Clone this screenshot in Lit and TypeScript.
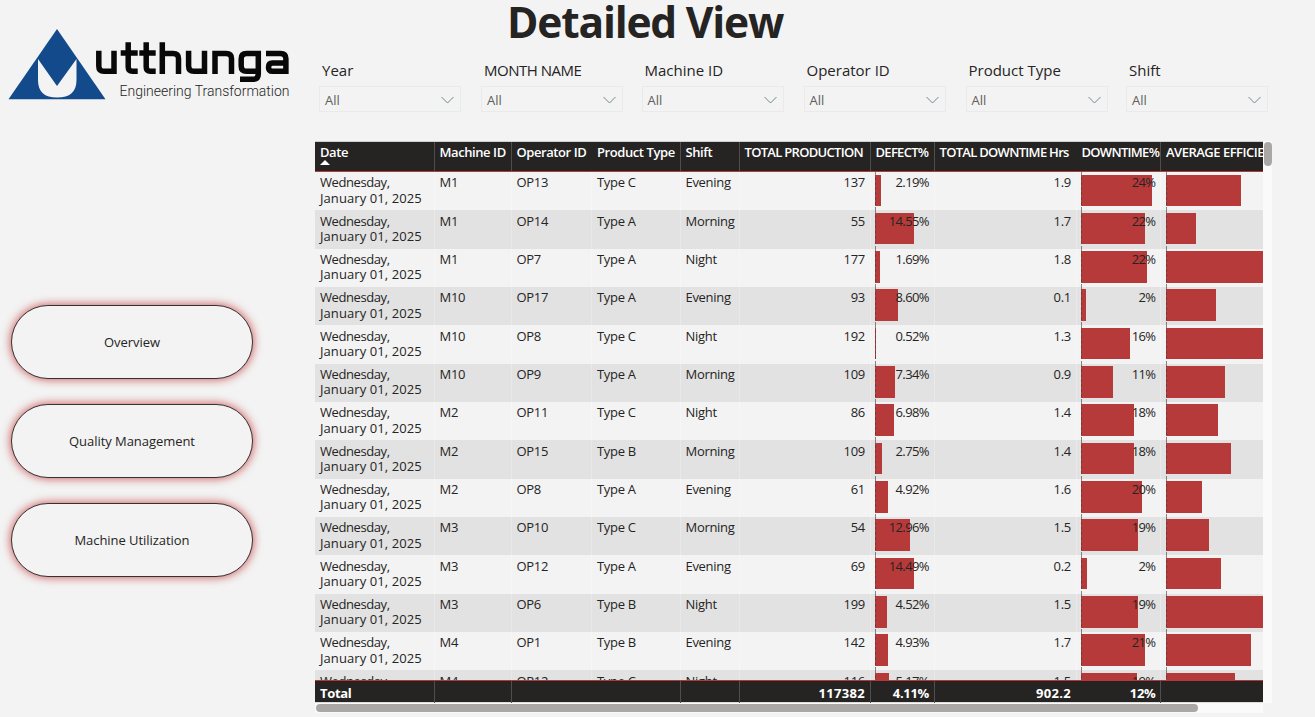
import { LitElement, html, css, svg } from "lit";
import { customElement } from "lit/decorators.js";

interface Row {
  m: string; op: string; type: string; shift: string; prod: string;
  defect: string; hrs: string; down: string; dw: number; aw: number;
}
const r = (m: string, op: string, type: string, shift: string, prod: string, defect: string, hrs: string, down: string, dw: number, aw: number): Row =>
  ({ m, op, type, shift, prod, defect, hrs, down, dw, aw });

const ROWS: Row[] = [
  r("M1", "OP13", "Type C", "Evening", "137", "2.19", "1.9", "24", 70.5, 75),
  r("M1", "OP14", "Type A", "Morning", "55", "14.55", "1.7", "22", 63.5, 30),
  r("M1", "OP7", "Type A", "Night", "177", "1.69", "1.8", "22", 65.5, 110),
  r("M10", "OP17", "Type A", "Evening", "93", "8.60", "0.1", "2", 4.5, 50.7),
  r("M10", "OP8", "Type C", "Night", "192", "0.52", "1.3", "16", 48.5, 110),
  r("M10", "OP9", "Type A", "Morning", "109", "7.34", "0.9", "11", 32.3, 59.3),
  r("M2", "OP11", "Type C", "Night", "86", "6.98", "1.4", "18", 53, 52),
  r("M2", "OP15", "Type B", "Morning", "109", "2.75", "1.4", "18", 53, 65.3),
  r("M2", "OP8", "Type A", "Evening", "61", "4.92", "1.6", "20", 60.5, 36.3),
  r("M3", "OP10", "Type C", "Morning", "54", "12.96", "1.5", "19", 56.5, 43),
  r("M3", "OP12", "Type A", "Evening", "69", "14.49", "0.2", "2", 5.7, 55.3),
  r("M3", "OP6", "Type B", "Night", "199", "4.52", "1.5", "19", 57, 110),
  r("M4", "OP1", "Type B", "Evening", "142", "4.93", "1.7", "21", 63.7, 85.5),
  r("M4", "OP12", "Type C", "Night", "116", "5.17", "1.5", "19", 55.5, 69.5),
];

@customElement("app-root")
export class AppRoot extends LitElement {
  static styles = css`
    :host { display: block; width: 1315px; height: 717px; overflow: hidden; background: #f3f3f3; color: #252423;
      font-family: "Trebuchet MS", "Open Sans", "Noto Sans", sans-serif; font-size: 13px; letter-spacing: -0.3px; }
    * { box-sizing: border-box; }
    .page { display: grid; grid-template-columns: 315px 1fr; height: 717px; }
    .side { display: flex; flex-direction: column; padding: 0 0 0 11px; }
    .logo { width: 300px; height: 120px; margin-left: -11px; flex: none; display: block; letter-spacing: 0; }
    .nav { display: flex; flex-direction: column; gap: 24.5px; margin-top: 184.6px; }
    .pill { width: 242px; height: 74.5px; border: 1px solid #333; border-radius: 37.5px; background: #f3f3f3; padding-bottom: .5px;
      box-shadow: 0 0 8px 1px rgba(192, 40, 40, .7); display: flex; align-items: center; justify-content: center; font-size: 13px; letter-spacing: -.05px; }
    .main { display: flex; flex-direction: column; }
    h1 { margin: 0 0 0 192px; height: 53px; line-height: 43px; font-size: 42.5px; font-weight: 700; letter-spacing: -1.2px; white-space: nowrap; }
    .slicers { display: grid; grid-template-columns: 162px 160.5px 162px 162px 160.5px 161px; height: 88px; padding: 7px 0 0 4px; letter-spacing: 0; }
    .slicer label { display: block; height: 26px; line-height: 20px; padding-left: 3px; font-size: 15px; }
    .slicer label.tight { letter-spacing: -.5px; }
    .select { width: 142px; height: 26px; border: 1px solid #eaeaea; display: flex; align-items: center; justify-content: space-between;
      padding: 2px 6px 0 5px; color: #605e5c; font-size: 13px; }
    .select svg { width: 13px; height: 8px; }
    .visual { display: grid; grid-template-columns: 948px 9px; grid-template-rows: 562px 10px; }
    .table { display: flex; flex-direction: column; overflow: hidden; width: 948px; }
    .line { display: grid; grid-template-columns: 119.5px 77px 80.5px 88.5px 59px 131px 64px 142px 84.5px 180px; flex: none; }
    .head { height: 31px; background: #252423; color: #fff; border-top: 1px solid #cfcfcf; border-bottom: 1px solid #b33a3a; font-weight: 600; letter-spacing: -.42px; }
    .head .caps { letter-spacing: -.7px; }
    .head .last { letter-spacing: -.5px; }
    .head .cell { padding-top: 0; line-height: 20px; border-right: 1px solid #4f4e4d; overflow: visible; }
    .head .plain, .foot .plain { border-right-color: transparent; }
    .cell { padding: 3.4px 4.5px 0 5px; line-height: 15.4px; white-space: nowrap; border-right: 1px solid rgba(255,255,255,.25); min-width: 0; }
    .date { letter-spacing: .08px; }
    .day { letter-spacing: -.42px; }
    .num { text-align: right; }
    .sort { display: block; width: 10px; height: 5px; margin-top: -2px; }
    .body { flex: 1; overflow: hidden; min-height: 0; }
    .body .line { height: 38.34px; }
    .body .line:nth-child(even) { background: #e2e2e2; }
    .line .bar { display: grid; padding: 0; overflow: hidden; }
    .bar > * { grid-area: 1 / 1; }
    .fill { margin: 2.5px 0 4px 4.5px; background: #b63a3a; height: 31.5px; }
    .axis { margin-left: 4.5px; width: 0; border-left: 1px dashed rgba(60,60,60,.6); }
    .val { padding: 3.4px 4.5px 0 0; text-align: right; letter-spacing: -.6px; }
    .foot { height: 23px; background: #252423; color: #fff; border-top: 1px solid #b33a3a; font-weight: 700; border-bottom: 1px solid #ddd; }
    .foot .cell { padding-top: 1px; line-height: 22px; border-right: 1px solid #4f4e4d; }
    .foot .plain { border-right-color: transparent; }
    .foot .wide { letter-spacing: .3px; }
    .vs { background: #fafafa; }
    .vthumb { width: 8px; height: 24px; margin: 1px 0 0 1px; border-radius: 4px; background: #a9a8a6; }
    .hs { background: #fafafa; padding: 1px; }
    .hthumb { width: 882px; height: 8px; border-radius: 4px; background: #a9a8a6; }
  `;

  private chevron() {
    return svg`<svg viewBox="0 0 13 8"><path d="M.5 1 6.5 7 12.5 1" fill="none" stroke="#6f8a92" stroke-width="1"/></svg>`;
  }

  private bar(width: number, value: string) {
    return html`<div class="cell bar"><div class="fill" style="width:${width}px"></div><div class="axis"></div><div class="val">${value}</div></div>`;
  }

  render() {
    return html`<div class="page">
      <div class="side">
        <svg class="logo" viewBox="0 0 300 120">
          <path d="M57 29 105.500 99.300H8.500Z" fill="#124a8b"/>
          <path d="M38 59 57 86 76.500 59V80C76.500 92 70 97.500 57.200 97.500S38 92 38 80Z" fill="#f3f3f3"/>
          <g fill="none" stroke="#080808" stroke-width="5.500">
            <path d="M98.800 50.700V66Q98.800 71.300 104 71.300H114V50.700"/>
            <path d="M128.200 42.300V67Q128.200 71.300 132.500 71.300H137.700M120.700 53H137.700"/>
            <path d="M146.200 42.300V67Q146.200 71.300 150.500 71.300H155.700M139.300 53H155.700"/>
            <path d="M162.300 42.300V74M162.300 53.400H173Q178.500 53.400 178.500 58.500V74"/>
            <path d="M188.600 50.700V66Q188.600 71.300 194 71.300H204.500V50.700"/>
            <path d="M215 74V53.400H226Q231.500 53.400 231.500 58.500V74"/>
            <path d="M258.300 71.300H246.500Q241.200 71.300 241.200 66V58.700Q241.200 53.400 246.500 53.400H258.300V74Q258.300 79.300 253 79.300H240"/>
            <path d="M266 53.400H280.500Q285.900 53.400 285.900 58.700V71.300H272.500Q268.500 71.300 268.500 67.200T272.500 63H285.900"/>
          </g>
          <text x="119.500" y="96" font-family="Roboto" font-weight="300" font-size="14" textLength="170" lengthAdjust="spacingAndGlyphs" fill="#252423">Engineering Transformation</text>
        </svg>
        <div class="nav">${["Overview", "Quality Management", "Machine Utilization"].map(t => html`<div class="pill">${t}</div>`)}</div>
      </div>
      <div class="main">
        <h1>Detailed View</h1>
        <div class="slicers">${["Year", "MONTH NAME", "Machine ID", "Operator ID", "Product Type", "Shift"].map(t =>
          html`<div class="slicer"><label class=${t === "MONTH NAME" ? "tight" : ""}>${t}</label><div class="select"><span>All</span>${this.chevron()}</div></div>`)}</div>
        <div class="visual">
          <div class="table">
            <div class="line head">
              <div class="cell">Date<svg class="sort" viewBox="0 0 10 5"><path d="M0 5 5 0 10 5Z" fill="#fff"/></svg></div>
              <div class="cell">Machine ID</div><div class="cell plain">Operator ID</div><div class="cell">Product Type</div><div class="cell">Shift</div>
              <div class="cell caps">TOTAL PRODUCTION</div><div class="cell caps">DEFECT%</div><div class="cell caps plain">TOTAL DOWNTIME Hrs</div>
              <div class="cell caps">DOWNTIME%</div><div class="cell last">AVERAGE EFFICIENCY</div>
            </div>
            <div class="body">${ROWS.map(d => html`<div class="line">
              <div class="cell date"><span class="day">Wednesday,</span><br>January 01, 2025</div><div class="cell">${d.m}</div><div class="cell">${d.op}</div>
              <div class="cell">${d.type}</div><div class="cell">${d.shift}</div><div class="cell num">${d.prod}</div>
              ${this.bar(Number(d.defect) * 2.71, d.defect + "%")}<div class="cell num">${d.hrs}</div>
              ${this.bar(d.dw, d.down + "%")}${this.bar(d.aw, "")}</div>`)}</div>
            <div class="line foot">
              <div class="cell">Total</div><div class="cell"></div><div class="cell plain"></div><div class="cell"></div><div class="cell"></div>
              <div class="cell num wide">117382</div><div class="cell num">4.11%</div><div class="cell num wide plain">902.2</div><div class="cell num">12%</div><div class="cell"></div>
            </div>
          </div>
          <div class="vs"><div class="vthumb"></div></div>
          <div class="hs"><div class="hthumb"></div></div>
        </div>
      </div>
    </div>`;
  }
}
